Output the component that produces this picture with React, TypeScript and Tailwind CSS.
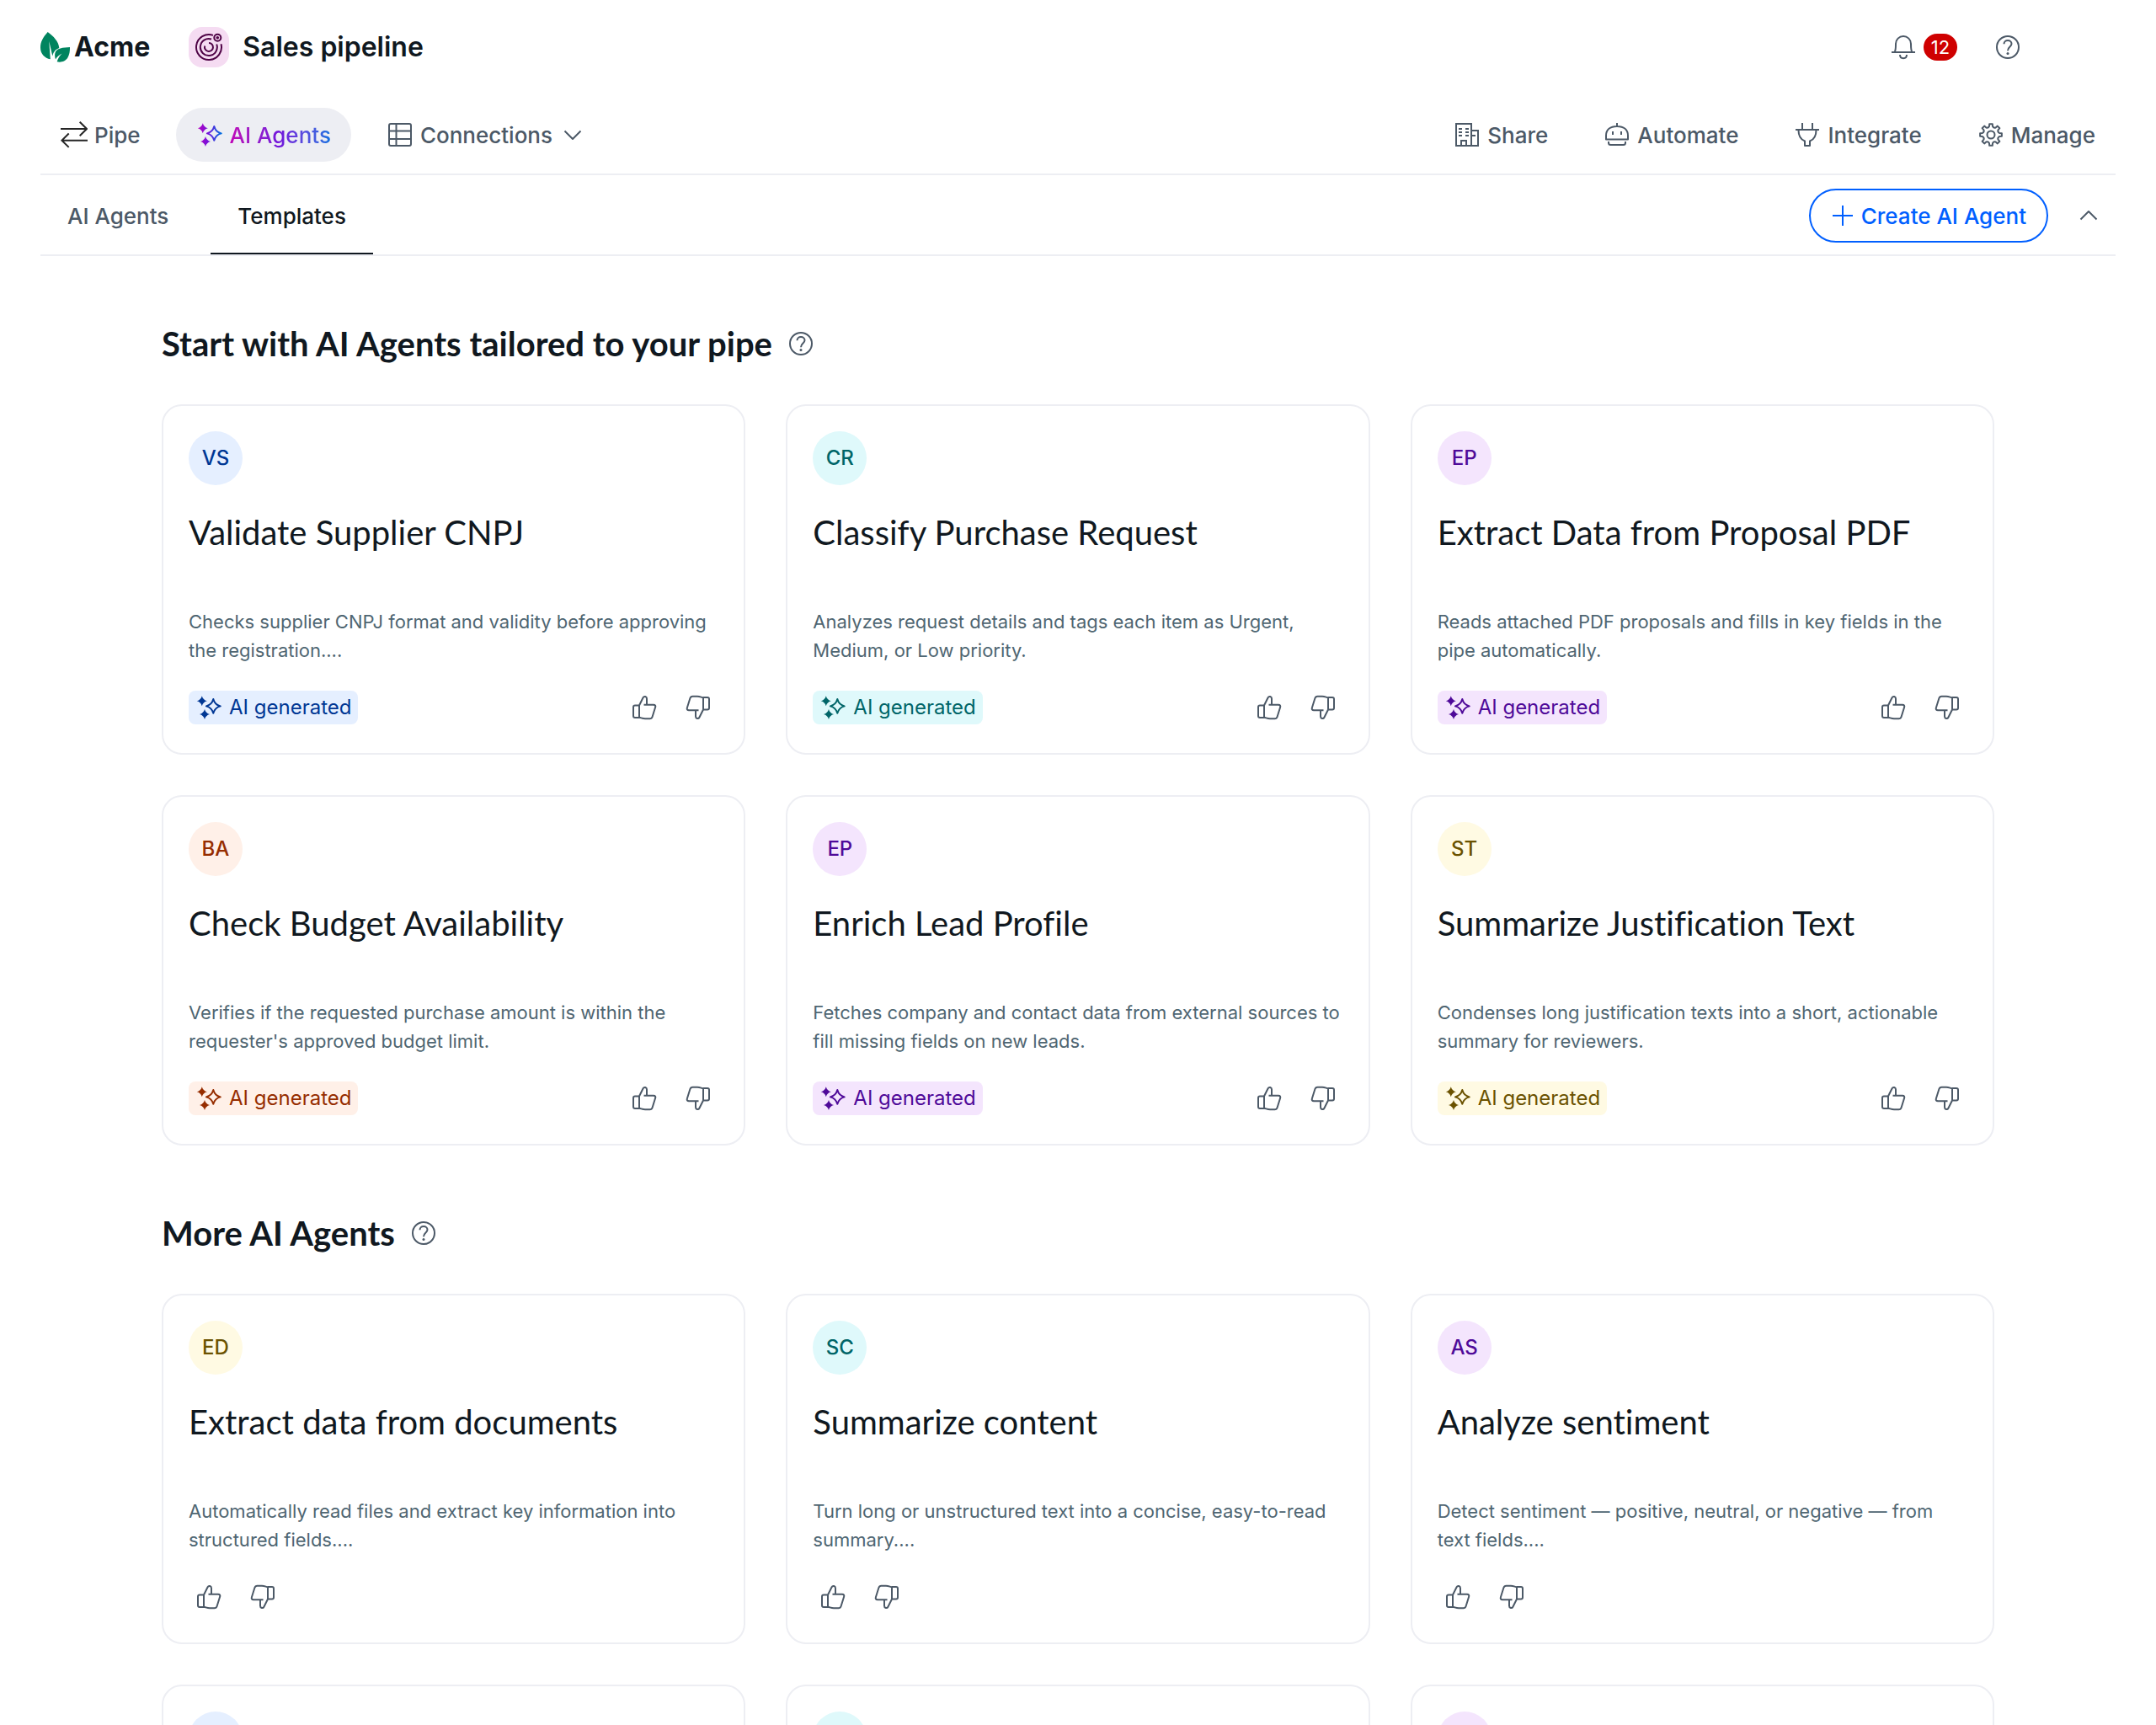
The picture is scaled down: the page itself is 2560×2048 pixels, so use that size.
import type { ReactNode } from "react";
import { clsx } from "clsx";

type Tone = "blue" | "teal" | "purple" | "orange" | "yellow";

interface Agent {
  initials?: string;
  tone: Tone;
  title?: string;
  description?: string;
  generated?: boolean;
}

const tones: Record<Tone, string> = {
  blue: "bg-[#e5efff] text-[#003794]",
  teal: "bg-[#dff9fb] text-[#006568]",
  purple: "bg-[#f4e5fd] text-[#4f0a99]",
  orange: "bg-[#fff0e8] text-[#962d00]",
  yellow: "bg-[#fffae3] text-[#6b5200]",
};

const tailoredAgents: Agent[] = [
  {
    initials: "VS",
    tone: "blue",
    title: "Validate Supplier CNPJ",
    description:
      "Checks supplier CNPJ format and validity before approving the registration....",
    generated: true,
  },
  {
    initials: "CR",
    tone: "teal",
    title: "Classify Purchase Request",
    description:
      "Analyzes request details and tags each item as Urgent, Medium, or Low priority.",
    generated: true,
  },
  {
    initials: "EP",
    tone: "purple",
    title: "Extract Data from Proposal PDF",
    description:
      "Reads attached PDF proposals and fills in key fields in the pipe automatically.",
    generated: true,
  },
  {
    initials: "BA",
    tone: "orange",
    title: "Check Budget Availability",
    description:
      "Verifies if the requested purchase amount is within the requester's approved budget limit.",
    generated: true,
  },
  {
    initials: "EP",
    tone: "purple",
    title: "Enrich Lead Profile",
    description:
      "Fetches company and contact data from external sources to fill missing fields on new leads.",
    generated: true,
  },
  {
    initials: "ST",
    tone: "yellow",
    title: "Summarize Justification Text",
    description:
      "Condenses long justification texts into a short, actionable summary for reviewers.",
    generated: true,
  },
];

const moreAgents: Agent[] = [
  {
    initials: "ED",
    tone: "yellow",
    title: "Extract data from documents",
    description:
      "Automatically read files and extract key information into structured fields....",
  },
  {
    initials: "SC",
    tone: "teal",
    title: "Summarize content",
    description:
      "Turn long or unstructured text into a concise, easy-to-read summary....",
  },
  {
    initials: "AS",
    tone: "purple",
    title: "Analyze sentiment",
    description:
      "Detect sentiment — positive, neutral, or negative — from text fields....",
  },
  { tone: "blue" },
  { tone: "teal" },
  { tone: "purple" },
];

function Icon({
  children,
  className = "size-8",
  box = 32,
}: {
  children: ReactNode;
  className?: string;
  box?: number;
}) {
  return (
    <svg
      viewBox={`0 0 ${box} ${box}`}
      className={clsx("shrink-0", className)}
      fill="none"
      stroke="currentColor"
      strokeWidth={2}
      strokeLinejoin="round"
      aria-hidden="true"
    >
      {children}
    </svg>
  );
}

function LeafLogo() {
  return (
    <svg viewBox="0 0 36 36" className="size-9 shrink-0" aria-hidden="true">
      <path
        fill="#00845f"
        d="M8.7 0C3.5 6 0 11 0 18.5 0 26 5 31 11.8 32.3L10.3 11l4 17.5C15.5 23.5 18 20.5 22.3 19 21.5 11 15.5 5 8.7 0Z"
      />
      <path
        fill="#00845f"
        d="M35 18c-8 .5-16.3 1-17.6 7-.6 3-.2 5.5.6 7.5 1.8-3.2 4.2-5.2 7.5-7-2.8 2.9-4.7 6-5.8 9.8 4.3.9 9.6.2 12.8-5C34.7 26.6 35.1 22 35 18Z"
      />
    </svg>
  );
}

function TargetIcon() {
  return (
    <Icon box={48} className="size-12">
      <path d="M29 9.9A15 15 0 1 0 38.5 20.2" />
      <path d="M27 14.5A10 10 0 1 0 33.2 20.5" />
      <path d="M24 19A5 5 0 1 1 19.2 22.5" />
      <circle cx="34.3" cy="12.7" r="4" />
      <circle cx="34.3" cy="12.7" r="1.8" fill="currentColor" stroke="none" />
    </Icon>
  );
}

function SparklesIcon({ gradient }: { gradient?: boolean }) {
  const paint = gradient ? "url(#sparkles)" : "currentColor";
  return (
    <Icon>
      {gradient && (
        <linearGradient
          id="sparkles"
          gradientUnits="userSpaceOnUse"
          x1="2"
          y1="16"
          x2="30"
          y2="16"
        >
          <stop offset="0" stopColor="#b800c0" />
          <stop offset="0.45" stopColor="#7014dc" />
          <stop offset="1" stopColor="#0070e0" />
        </linearGradient>
      )}
      <g fill={paint} stroke="none">
        <path d="M7.8 2.3C8.7 5.5 10.6 7.4 13.8 8.3 10.6 9.2 8.7 11.1 7.8 14.3 6.9 11.1 5 9.2 1.8 8.3 5 7.4 6.9 5.5 7.8 2.3Z" />
        <path d="M11 18C11.9 21.2 13.8 23.1 17 24 13.8 24.9 11.9 26.8 11 30 10.1 26.8 8.2 24.9 5 24 8.2 23.1 10.1 21.2 11 18Z" />
      </g>
      <path
        stroke={paint}
        d="M21.3 6C22.5 10.5 25.2 13.2 29.7 14.4 25.2 15.6 22.5 18.3 21.3 22.8 20.1 18.3 17.4 15.6 12.9 14.4 17.4 13.2 20.1 10.5 21.3 6Z"
      />
    </Icon>
  );
}

function SwapIcon() {
  return (
    <Icon className="size-8 text-[#262626]">
      <path
        strokeLinejoin="miter"
        d="M0 9h31M22.7.8 31 9l-8.3 8.2M32 22.7H1M9.7 14.5 1.4 22.7l8.3 8.2"
      />
    </Icon>
  );
}

function TableIcon() {
  return (
    <Icon>
      <rect x="3" y="3" width="26" height="26" rx="2" />
      <path d="M11.5 3v26M3 11.500h26M3 21h26" />
    </Icon>
  );
}

function BuildingIcon() {
  return (
    <Icon>
      <path strokeLinejoin="miter" d="M3 3h18v26H3ZM21 11h8v18h-8M9 29v-6h6v6" />
      <path d="M6 9h4M6 13h4M6 17h4M14 9h4M14 13h4M14 17h4M22 17h4" />
    </Icon>
  );
}

function BotIcon() {
  return (
    <Icon>
      <path d="M16 2v4M3 21.5V17C3 10 8 6 16 6s13 4 13 11v4.5ZM11 12v4M21 12v4M6 24v1.5C6 27 7 28 8.5 28h15c1.5 0 2.5-1 2.5-2.5V24" />
    </Icon>
  );
}

function PlugIcon() {
  return (
    <Icon>
      <path d="M10 2v8M22 2v8M2 10h28M5.5 10.5c0 7 2.2 11 7.5 13V29h6v-5.5c5.3-2 7.500-6 7.500-13" />
    </Icon>
  );
}

const polar = (radius: number, angle: number) =>
  `${(16 + radius * Math.sin(angle)).toFixed(2)} ${(16 - radius * Math.cos(angle)).toFixed(2)}`;

const gearOutline =
  Array.from({ length: 8 }, (_, i) => {
    const a = (i * Math.PI) / 4;
    return `${i === 0 ? "M" : "L"}${polar(10.2, a - 0.2)}L${polar(13, a - 0.14)}L${polar(13, a + 0.14)}L${polar(10.2, a + 0.2)}Q${polar(8.4, a + Math.PI / 8)} ${polar(10.2, a + Math.PI / 4 - 0.2)}`;
  }).join("") + "Z";

function GearIcon() {
  return (
    <Icon>
      <path d={gearOutline} />
      <circle cx="16" cy="16" r="4.5" />
    </Icon>
  );
}

function BellIcon() {
  return (
    <Icon>
      <path d="M2 22h28M5.5 22C7 20.5 7 18 7 12a9 9 0 0 1 18 0c0 6 0 8.5 1.5 10M12 25c0 2.8 1.5 4.2 4 4.2s4-1.4 4-4.2" />
    </Icon>
  );
}

function HelpIcon() {
  return (
    <Icon>
      <circle cx="16" cy="16" r="13" />
      <path d="M11.5 12.3c0-2.5 1.9-4.3 4.5-4.3s4.5 1.7 4.5 4c0 3.6-4.5 3.6-4.5 8.3" />
      <circle cx="16" cy="23.6" r="1.5" fill="currentColor" stroke="none" />
    </Icon>
  );
}

function ThumbIcon({ down }: { down?: boolean }) {
  return (
    <Icon className={clsx("size-8", down && "rotate-180")}>
      <path d="M10 13.5H5a2 2 0 0 0-2 2V26a2 2 0 0 0 2 2h5ZM10 13.5l4.6-9.2C15.8 2 19 2.8 19 5.5v7.2M15.5 12.7H27c1.9 0 2.7 1.3 2.1 3.1L25.600 27c-.5 1.5-1.5 2.2-3 2.2H17c-3 0-4.5-1-7-1.5" />
    </Icon>
  );
}

function Chevron({ up }: { up?: boolean }) {
  return (
    <Icon box={24} className={clsx("size-6", up && "rotate-180")}>
      <path d="m2.5 7.5 9.5 9.5 9.5-9.5" />
    </Icon>
  );
}

const navItem =
  "flex h-16 items-center gap-2 rounded-full px-6 text-[26px] font-medium";

function NavButton({ icon, label }: { icon: ReactNode; label: string }) {
  return (
    <button type="button" className={navItem}>
      {icon}
      {label}
    </button>
  );
}

function TopBar() {
  return (
    <header className="flex h-28 items-center">
      <a href="#" className="flex items-center gap-1 text-[32px] font-bold text-[#101820]">
        <LeafLogo />
        Acme
      </a>
      <span className="ml-11.5 rounded-2xl bg-[#f5dcf2] text-[#4f0446]">
        <TargetIcon />
      </span>
      <h1 className="ml-4 text-[32px] font-semibold text-[#101820]">
        Sales pipeline
      </h1>
      <div className="mr-28 ml-auto flex items-center gap-11">
        <button type="button" aria-label="Notifications" className="flex items-center gap-2">
          <BellIcon />
          <span className="w-10 rounded-full bg-[#cf0000] text-[22px] leading-8 text-white">
            12
          </span>
        </button>
        <button type="button" aria-label="Help">
          <HelpIcon />
        </button>
      </div>
    </header>
  );
}

function MainNav() {
  return (
    <nav className="flex items-center justify-between border-b-2 border-[#edeef3] pt-4 pb-3.5">
      <div className="flex gap-4.5">
        <NavButton icon={<SwapIcon />} label="Pipe" />
        <button type="button" aria-current="page" className={clsx(navItem, "bg-[#edeef3]")}>
          <SparklesIcon gradient />
          <span className="bg-linear-to-r from-[#c000b8] via-[#7014dc] to-[#0070e0] bg-clip-text text-transparent">
            AI Agents
          </span>
        </button>
        <button type="button" className={navItem}>
          <TableIcon />
          Connections
          <span className="ml-1">
            <Chevron />
          </span>
        </button>
      </div>
      <div className="flex gap-4.5">
        <NavButton icon={<BuildingIcon />} label="Share" />
        <NavButton icon={<BotIcon />} label="Automate" />
        <NavButton icon={<PlugIcon />} label="Integrate" />
        <NavButton icon={<GearIcon />} label="Manage" />
      </div>
    </nav>
  );
}

function SubNav() {
  return (
    <div className="flex h-24 items-center justify-between border-b-2 border-[#edeef3]">
      <div className="flex h-full gap-4.5 text-[26px] font-medium">
        <button type="button" className="px-8 pt-0.5">
          AI Agents
        </button>
        <button
          type="button"
          aria-current="page"
          className="border-b-2 border-[#101820] px-8 pt-1 text-[#101820]"
        >
          Templates
        </button>
      </div>
      <div className="flex items-center gap-9 pt-0.5 pr-5">
        <button
          type="button"
          className="flex h-16 items-center gap-2 rounded-full border-2 border-[#005fff] px-6 text-[26px] font-medium text-[#005fff]"
        >
          <Icon className="size-7" box={28}>
            <path d="M14 2v24M2 14h24" />
          </Icon>
          Create AI Agent
        </button>
        <button type="button" aria-label="Collapse header">
          <Chevron up />
        </button>
      </div>
    </div>
  );
}

function AgentCard({ agent }: { agent: Agent }) {
  return (
    <article className="flex h-104 flex-col rounded-3xl border-2 border-[#edeef3] p-7.5">
      <span
        className={clsx(
          "flex size-16 shrink-0 items-center justify-center rounded-full text-2xl font-medium",
          tones[agent.tone],
        )}
      >
        {agent.initials}
      </span>
      <h3 className="mt-8 h-24 font-['Lato',sans-serif] text-[40px] leading-12 text-[#101820] [font-variant-ligatures:none]">
        {agent.title}
      </h3>
      <p className="mt-[17px] text-[22px] leading-8.5 text-[#4f6672]">
        {agent.description}
      </p>
      <div className="mt-auto flex items-center justify-between">
        {agent.generated && (
          <span
            className={clsx(
              "flex h-10 items-center gap-2 rounded-lg px-2 text-2xl",
              tones[agent.tone],
            )}
          >
            <SparklesIcon />
            AI generated
          </span>
        )}
        <div className="flex gap-4">
          <button type="button" aria-label="Like" className="p-2">
            <ThumbIcon />
          </button>
          <button type="button" aria-label="Dislike" className="p-2">
            <ThumbIcon down />
          </button>
        </div>
      </div>
    </article>
  );
}

function AgentSection({ title, agents }: { title: string; agents: Agent[] }) {
  return (
    <section className="flex flex-col gap-12">
      <div className="flex items-center gap-4.5">
        <h2 className="font-['Lato',sans-serif] text-[40px] leading-12 font-bold text-[#101820]">
          {title}
        </h2>
        <button type="button" aria-label={`About: ${title}`}>
          <HelpIcon />
        </button>
      </div>
      <div className="grid grid-cols-3 gap-12">
        {agents.map((agent, index) => (
          <AgentCard key={index} agent={agent} />
        ))}
      </div>
    </section>
  );
}

export default function App() {
  return (
    <div className="h-screen w-full overflow-hidden bg-white px-12 font-['Inter',sans-serif] text-[#4c5967]">
      <TopBar />
      <MainNav />
      <SubNav />
      <main className="flex flex-col gap-20 px-36 pt-20">
        <AgentSection
          title="Start with AI Agents tailored to your pipe"
          agents={tailoredAgents}
        />
        <AgentSection title="More AI Agents" agents={moreAgents} />
      </main>
    </div>
  );
}
